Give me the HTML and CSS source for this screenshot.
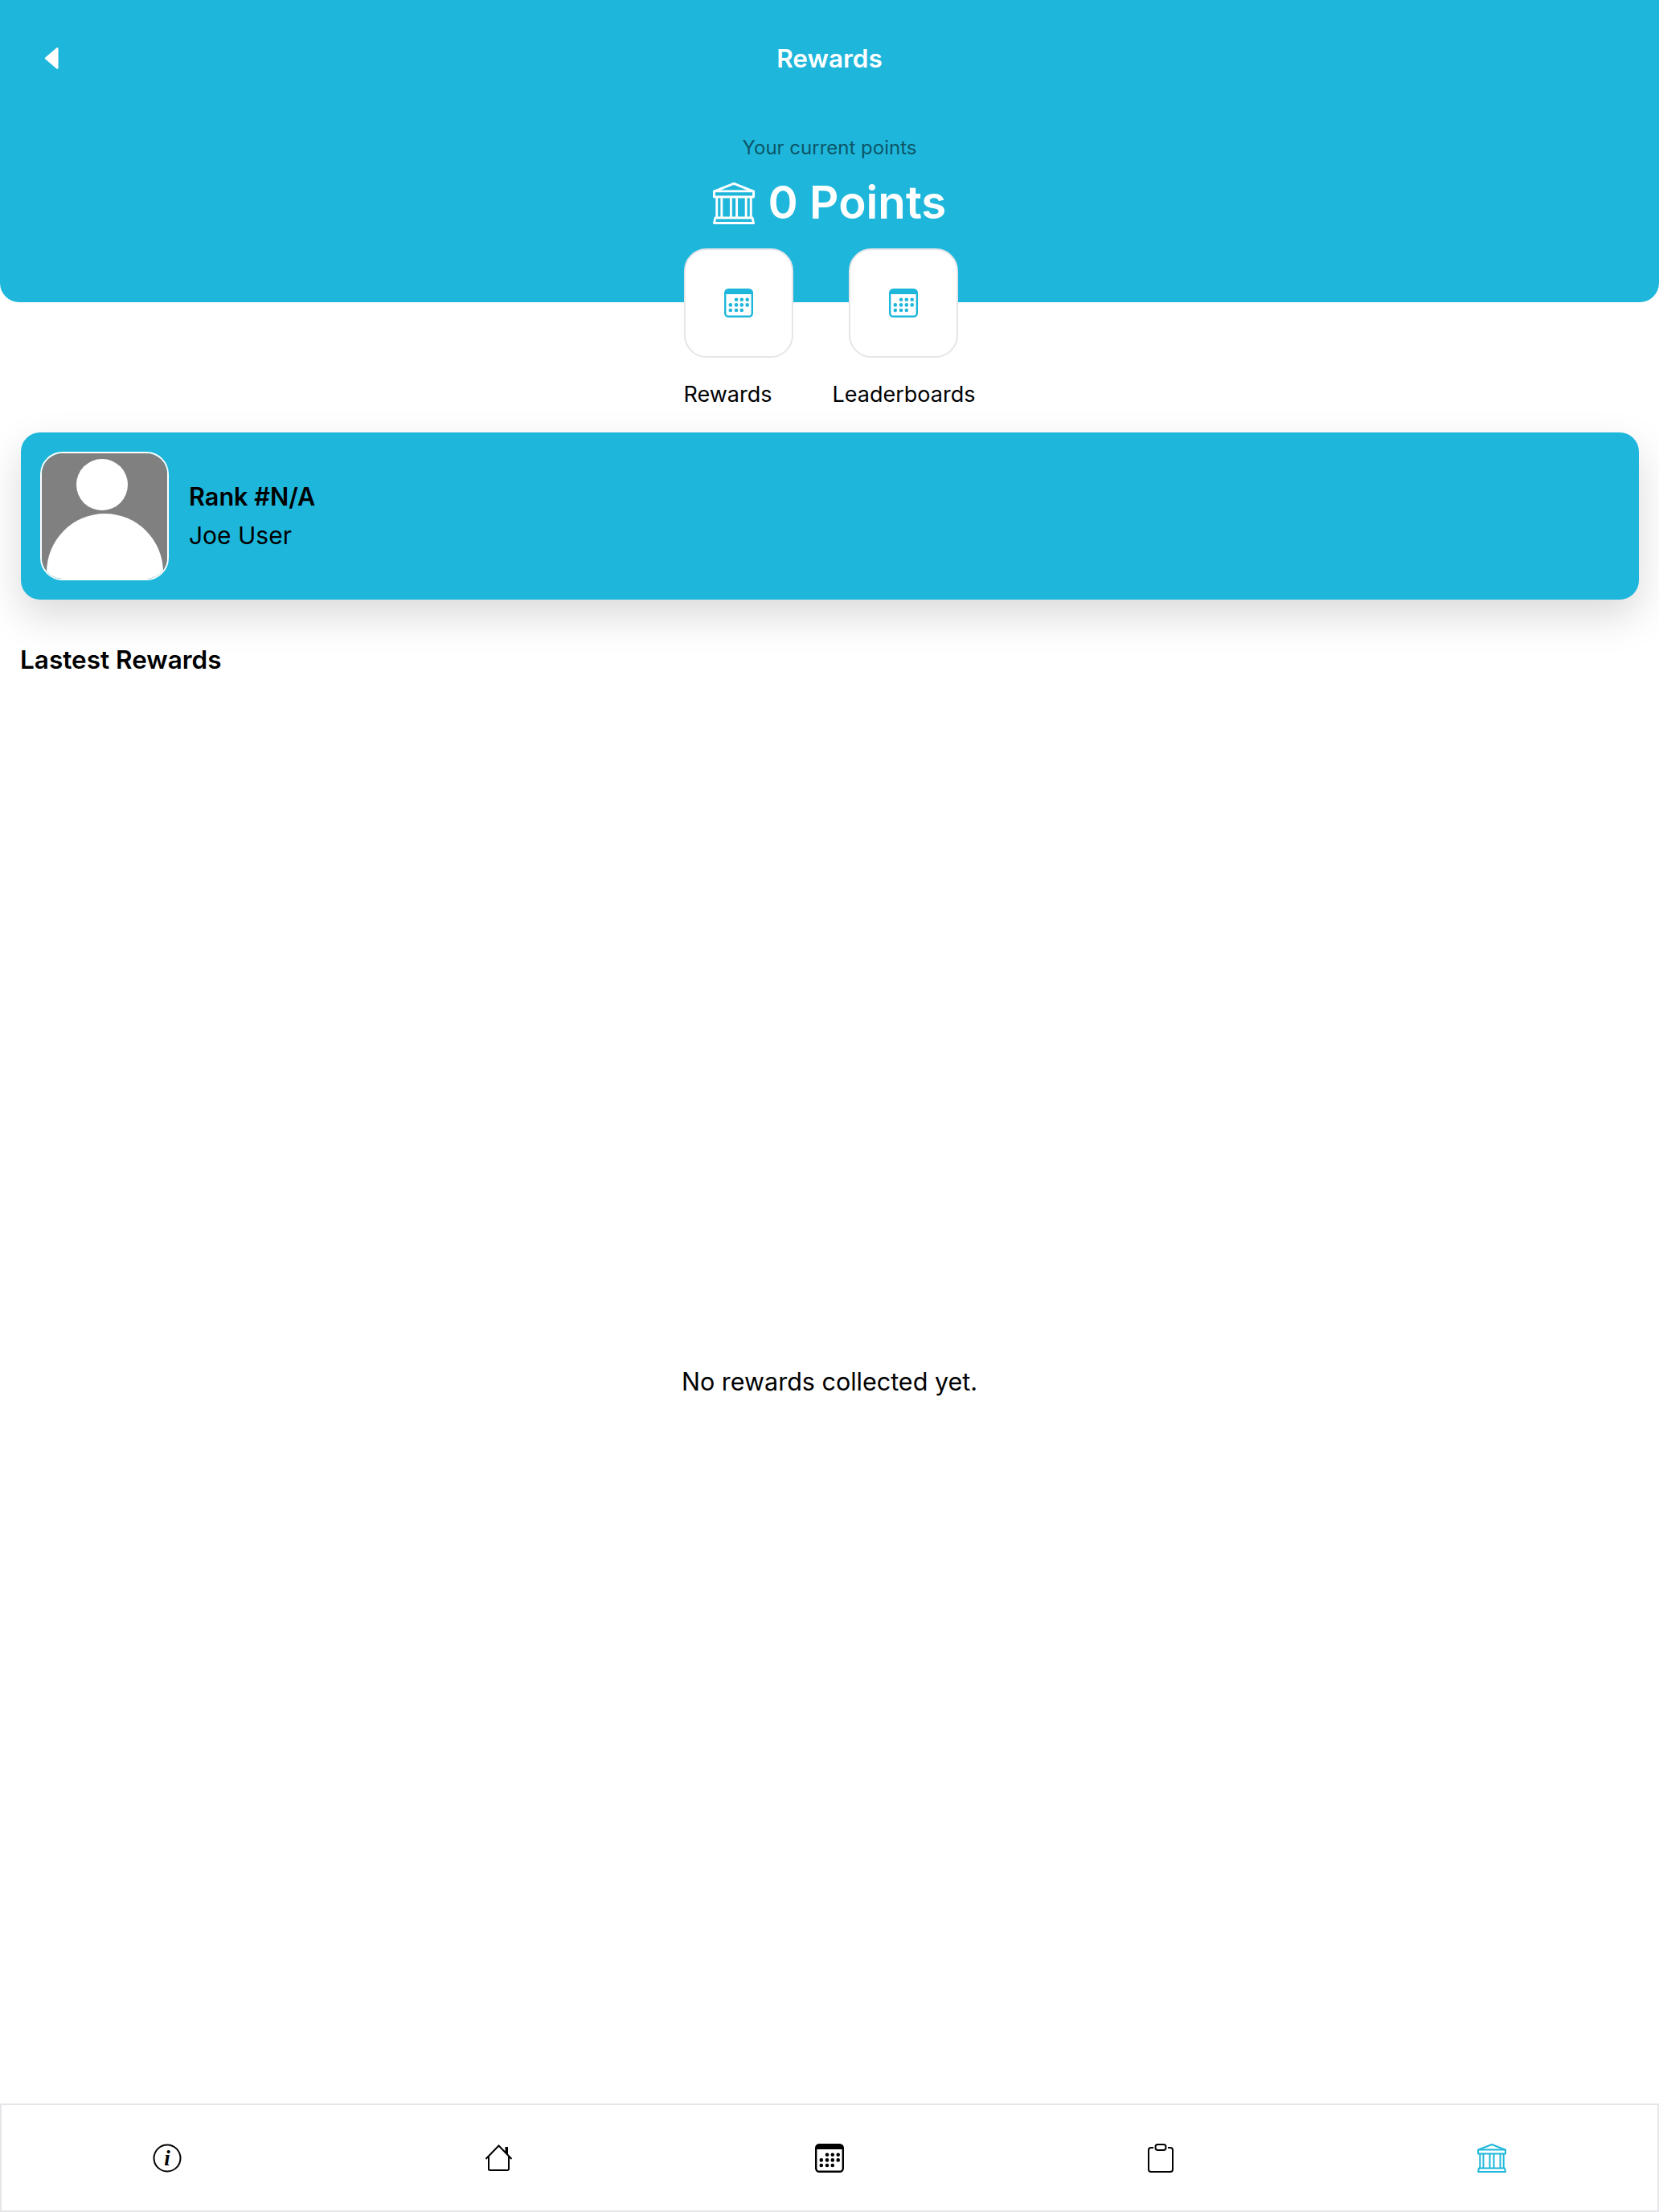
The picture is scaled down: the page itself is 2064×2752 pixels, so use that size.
FILE: index.html
```html
<!DOCTYPE html>
<html lang="en">
<head>
    <meta charset="UTF-8">
    <meta name="viewport" content="width=device-width, initial-scale=1.0">
    <title>Rewards</title>
    <link rel="stylesheet" href="styles.css">
</head>
<body>
    <svg class="icon-defs" width="0" height="0" aria-hidden="true">
        <symbol id="icon-calendar" viewBox="0 0 36 36">
            <rect x="1.200" y="1.200" width="33.600" height="33.600" rx="4" fill="none" stroke="currentColor" stroke-width="2.400"/>
            <path d="M1 7V5a4 4 0 0 1 4-4h26a4 4 0 0 1 4 4v2z" fill="currentColor"/>
            <g fill="currentColor">
                <circle cx="15" cy="13.7" r="2.300"/>
                <circle cx="21.8" cy="13.7" r="2.300"/>
                <circle cx="28.7" cy="13.7" r="2.300"/>
                <circle cx="7.8" cy="20.4" r="2.300"/>
                <circle cx="15" cy="20.4" r="2.300"/>
                <circle cx="21.8" cy="20.4" r="2.300"/>
                <circle cx="28.7" cy="20.4" r="2.300"/>
                <circle cx="7.8" cy="27" r="2.300"/>
                <circle cx="15" cy="27" r="2.300"/>
                <circle cx="21.8" cy="27" r="2.300"/>
            </g>
        </symbol>
        <symbol id="icon-bank" viewBox="0 0 36 36">
            <g fill="none" stroke="currentColor" stroke-width="2" stroke-linejoin="round">
                <path d="M1.5 7.5 18 1l16.500 6.500"/>
                <rect x="1" y="7.500" width="34" height="5"/>
                <path d="M3.300 12.500v18M7.500 12.500v18M15.500 12.500v18M20.500 12.500v18M28.500 12.500v18M32.700 12.500v18"/>
                <path d="M2 30.500h32l1 4.500H1z"/>
            </g>
        </symbol>
    </svg>

    <div class="page">
        <header class="top">
            <div class="top-bar">
                <svg class="back" viewBox="0 0 17 26" aria-label="Back">
                    <path d="M15 1.500 1.500 13 15 24.500z" fill="#fff" stroke="#fff" stroke-width="2.500" stroke-linejoin="round"/>
                </svg>
                <h1>Rewards</h1>
            </div>
            <p class="points-label">Your current points</p>
            <div class="points">
                <svg class="points-icon"><use href="#icon-bank"/></svg>
                <span>0 Points</span>
            </div>
        </header>

        <nav class="tiles">
            <a class="tile-item tile-left">
                <span class="tile"><svg class="icon"><use href="#icon-calendar"/></svg></span>
                <span class="tile-label">Rewards</span>
            </a>
            <a class="tile-item">
                <span class="tile"><svg class="icon"><use href="#icon-calendar"/></svg></span>
                <span class="tile-label">Leaderboards</span>
            </a>
        </nav>

        <section class="rank-card">
            <div class="avatar">
                <svg viewBox="0 0 156 156">
                    <rect width="156" height="156" fill="#808080"/>
                    <circle cx="75" cy="39" r="32" fill="#fff"/>
                    <ellipse cx="78.500" cy="148" rx="72.500" ry="73" fill="#fff"/>
                </svg>
            </div>
            <div>
                <div class="rank">Rank #N/A</div>
                <div class="user-name">Joe User</div>
            </div>
        </section>

        <h2 class="section-title">Lastest Rewards</h2>
        <div class="empty">No rewards collected yet.</div>

        <footer class="tabbar">
            <div class="tab">
                <svg class="icon" viewBox="0 0 36 36">
                    <circle cx="18" cy="18" r="16.500" fill="none" stroke="currentColor" stroke-width="2"/>
                    <text class="info-i" x="18" y="27" text-anchor="middle">i</text>
                </svg>
            </div>
            <div class="tab">
                <svg class="icon" viewBox="0 0 36 36">
                    <path d="M2.500 19 18.500 2.500 34.500 19M6 16v15.500a1.500 1.500 0 0 0 1.500 1.500h22a1.500 1.500 0 0 0 1.500-1.500V16" fill="none" stroke="currentColor" stroke-width="2"/>
                    <path d="M26.500 4h3.500v10l-3.500-3.500z" fill="currentColor"/>
                </svg>
            </div>
            <div class="tab"><svg class="icon"><use href="#icon-calendar"/></svg></div>
            <div class="tab">
                <svg class="icon" viewBox="0 0 36 36" fill="none" stroke="currentColor" stroke-width="2">
                    <path d="M9 5H6a3 3 0 0 0-3 3v24a3 3 0 0 0 3 3h24a3 3 0 0 0 3-3V8a3 3 0 0 0-3-3h-3"/>
                    <rect x="11.500" y="1" width="13" height="7" rx="3"/>
                </svg>
            </div>
            <div class="tab tab-active"><svg class="icon"><use href="#icon-bank"/></svg></div>
        </footer>
    </div>
</body>
</html>
```

FILE: styles.css
```css
* {
    box-sizing: border-box;
}
body {
    margin: 0;
    background-color: #fff;
    color: #000;
    font-family: Inter, "Noto Sans", sans-serif;
}
.icon-defs {
    position: absolute;
}
.page {
    display: flex;
    flex-direction: column;
    height: 2752px;
    overflow: hidden;
}
.top {
    height: 376px;
    flex-shrink: 0;
    background-color: #1eb7db;
    border-radius: 0 0 24px 24px;
    color: #fff;
    text-align: center;
}
.top-bar {
    position: relative;
    height: 146px;
    padding-top: 53px;
}
.top-bar h1 {
    margin: 0;
    font-size: 31.500px;
    line-height: 40px;
    font-weight: 600;
}
.back {
    position: absolute;
    left: 55px;
    top: 59px;
    width: 19px;
    height: 27px;
}
.points-label {
    margin: 0;
    font-size: 24px;
    line-height: 76px;
    height: 76px;
    color: #0c5568;
}
.points {
    display: flex;
    align-items: center;
    justify-content: center;
    gap: 17px;
    margin-top: -5px;
    font-size: 56.500px;
    line-height: 70px;
    font-weight: 600;
}
.points-icon {
    width: 52px;
    height: 52px;
    margin-top: 2px;
}
.icon {
    display: block;
    width: 36px;
    height: 36px;
}
.tiles {
    display: flex;
    justify-content: center;
    gap: 49px;
    margin-top: -67px;
    position: relative;
}
.tile-item {
    display: flex;
    flex-direction: column;
    align-items: center;
}
.tile-left {
    align-items: flex-start;
}
.tile {
    display: flex;
    align-items: center;
    justify-content: center;
    width: 136px;
    height: 136px;
    background-color: #fff;
    border: 2px solid #e5e5ea;
    border-radius: 28px;
    color: #1eb7db;
}
.tile-label {
    margin-top: 28px;
    font-size: 27px;
    line-height: 36px;
}
.rank-card {
    display: flex;
    align-items: center;
    gap: 25px;
    height: 208px;
    margin: 29px 25px 0 26px;
    padding: 0 24px;
    background-color: #1eb7db;
    border-radius: 24px;
    box-shadow: 0 20px 50px rgba(0, 0, 0, 0.15);
}
.avatar {
    width: 160px;
    height: 160px;
    flex-shrink: 0;
    border: 2px solid #fff;
    border-radius: 28px;
    overflow: hidden;
}
.avatar svg {
    display: block;
    width: 100%;
    height: 100%;
}
.rank {
    font-size: 30.600px;
    line-height: 48px;
    font-weight: 600;
}
.user-name {
    font-size: 30px;
    line-height: 48px;
}
.section-title {
    margin: 56px 0 0 25px;
    font-size: 31.500px;
    line-height: 38px;
    font-weight: 600;
}
.empty {
    flex: 1;
    display: flex;
    align-items: center;
    justify-content: center;
    padding-bottom: 20px;
    font-size: 30.500px;
}
.tabbar {
    display: flex;
    height: 135px;
    flex-shrink: 0;
    border: 2px solid #e5e5ea;
}
.tab {
    flex: 1;
    display: flex;
    align-items: center;
    justify-content: center;
}
.tab-active {
    color: #1eb7db;
}
.info-i {
    font-family: "Liberation Serif", serif;
    font-style: italic;
    font-weight: 700;
    font-size: 27px;
    fill: currentColor;
}
```
